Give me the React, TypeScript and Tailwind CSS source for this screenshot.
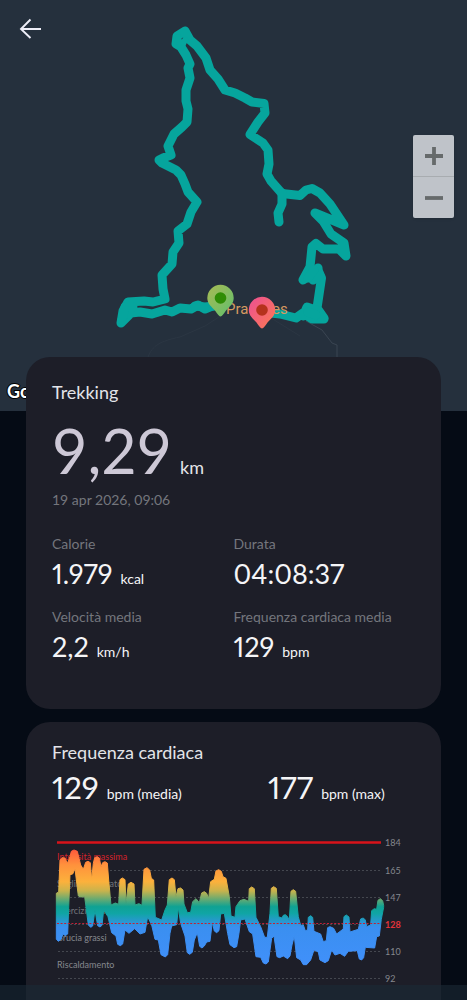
import React from "react";

type Point = [number, number];

// Heart-rate band outline, in thirds of a chart unit.
const upperEdge: Point[] = [
  [49, 190], [56, 186], [60, 90], [66, 83], [75, 84], [82, 100], [90, 80], [94, 64], [102, 60], [112, 64], [122, 105], [130, 118], [137, 97], [144, 94], [151, 98], [155, 150],
  [160, 100], [164, 83], [171, 80], [178, 84], [183, 110], [188, 98], [195, 95], [202, 99], [206, 150], [213, 225], [226, 219], [236, 223], [240, 149], [247, 144], [255, 149],
  [258, 222], [265, 162], [273, 157], [282, 162], [285, 225], [297, 221], [306, 226], [312, 118], [321, 113], [329, 120], [334, 145], [341, 150], [346, 262], [365, 270],
  [375, 240], [382, 225], [388, 149], [396, 144], [403, 149], [408, 200], [414, 176], [422, 174], [429, 180], [432, 222], [442, 248], [452, 247], [458, 215], [468, 206], [478, 218], [485, 189],
  [493, 185], [500, 190], [506, 205], [512, 155], [523, 148], [528, 123], [536, 119], [544, 124], [549, 140], [558, 145], [568, 200], [573, 258], [585, 262], [588, 230],
  [600, 212], [612, 208], [626, 214], [628, 176], [635, 171], [643, 176], [648, 262], [662, 290], [674, 322], [682, 322], [690, 250], [694, 175], [701, 170], [709, 175],
  [715, 260], [726, 264], [730, 256], [736, 254], [743, 260], [748, 272], [753, 184], [760, 179], [767, 184], [775, 260], [782, 286], [790, 285], [796, 302], [803, 300], [805, 262], [812, 257],
  [818, 262], [822, 304], [842, 312], [850, 335], [859, 332], [863, 293], [870, 290], [881, 295], [890, 312], [910, 297], [912, 260], [919, 255], [927, 261], [930, 306], [955, 298],
  [962, 267], [970, 264], [976, 270], [980, 290], [992, 285], [995, 242], [1003, 236], [1010, 238], [1014, 211], [1021, 206], [1028, 212], [1031, 226],
];

const lowerEdge: Point[] = [
  [49, 328], [55, 334], [63, 328], [69, 312], [76, 317], [83, 312], [90, 134], [98, 132], [105, 116], [115, 198], [122, 201], [134, 200], [145, 285], [152, 292], [158, 288],
  [165, 240], [173, 287], [180, 291], [186, 286], [191, 240], [204, 260], [215, 308], [228, 318], [233, 343], [241, 347], [248, 342], [255, 300], [267, 310], [284, 296], [300, 312],
  [315, 307], [323, 260], [335, 285], [345, 328], [355, 330], [363, 374], [376, 381], [383, 374], [390, 310], [395, 288], [410, 284], [415, 232], [422, 280], [435, 318], [442, 368],
  [449, 373], [457, 367], [463, 330], [472, 308], [479, 349], [486, 354], [493, 348], [500, 336], [510, 334], [517, 276], [523, 303], [530, 308], [537, 302], [542, 252], [553, 250],
  [563, 310], [570, 344], [582, 353], [590, 350], [597, 310], [602, 270], [615, 267], [628, 305], [638, 312], [648, 380], [662, 382], [670, 399], [678, 402], [685, 396], [695, 325],
  [702, 318], [711, 380], [719, 383], [730, 378], [743, 386], [750, 378], [756, 345], [763, 318], [770, 383], [782, 390], [790, 404], [800, 404], [812, 390], [822, 360], [835, 366],
  [840, 390], [855, 398], [865, 392], [875, 360], [885, 375], [900, 370], [914, 379], [925, 364], [952, 362], [958, 387], [965, 390], [971, 383], [976, 352], [1004, 354],
  [1010, 320], [1018, 318], [1024, 268], [1031, 232],
];

const bandPoints = [...upperEdge, ...[...lowerEdge].reverse()].map((p) => p.join(",")).join(" ");

const gridLines = [
  { y: 40, value: "165" },
  { y: 67, value: "147" },
  { y: 94, value: "128" },
  { y: 121, value: "110" },
  { y: 148, value: "92" },
];

const zones = [
  { label: "Intensità massima", y: 27, tone: "fill-[#d3222b]" },
  { label: "Soglia del lattato", y: 54, tone: "fill-[#72757c]" },
  { label: "Esercizio aerobico", y: 81, tone: "fill-[#72757c]" },
  { label: "Brucia grassi", y: 108, tone: "fill-[#85888e]" },
  { label: "Riscaldamento", y: 135, tone: "fill-[#85888e]" },
];

function HeartRateChart() {
  return (
    <svg viewBox="51 830 365 155" className="block w-full" role="img" aria-label="Frequenza cardiaca">
      <defs>
        <linearGradient id="zones" gradientUnits="userSpaceOnUse" x1="0" y1="60" x2="0" y2="400">
          <stop offset="0" stopColor="#ff5a3c" />
          <stop offset="0.13" stopColor="#ff913c" />
          <stop offset="0.28" stopColor="#fcb13c" />
          <stop offset="0.36" stopColor="#c9b34c" />
          <stop offset="0.5" stopColor="#0fa293" />
          <stop offset="0.56" stopColor="#10a5a5" />
          <stop offset="0.68" stopColor="#3a8ff0" />
          <stop offset="1" stopColor="#4090fa" />
        </linearGradient>
      </defs>
      <g transform="translate(0 830)" className="font-['Lato',sans-serif] text-[9px]">
        {zones.map((zone) => (
          <text key={zone.label} x="57" y={zone.y + 3} className={zone.tone}>
            {zone.label}
          </text>
        ))}
        {gridLines.map((line) => (
          <line key={line.value} x1="58" x2="380" y1={line.y + 0.5} y2={line.y + 0.5} stroke="#44474f" strokeDasharray="2 2" />
        ))}
        <g transform="translate(40 0) scale(0.3333)">
          <polygon points={bandPoints} fill="url(#zones)" stroke="url(#zones)" strokeWidth="3" strokeLinejoin="round" />
        </g>
        <line x1="57" x2="381" y1="12.5" y2="12.5" stroke="#d8131a" strokeWidth="2.4" />
        <line x1="57" x2="381" y1="93.5" y2="93.5" stroke="#c41f36" strokeDasharray="2 1.6" />
        <text x="385" y="16" className="fill-[#85888e]">184</text>
        {gridLines.map((line) => (
          <text key={line.value} x="385" y={line.y + 4} className={line.value === "128" ? "fill-[#e0333a] font-bold" : "fill-[#85888e]"}>
            {line.value}
          </text>
        ))}
      </g>
    </svg>
  );
}

function Pin({ x, y, from, to, dot }: { x: number; y: number; from: string; to: string; dot: string }) {
  const id = `pin-${x}`;
  return (
    <g transform={`translate(${x} ${y})`}>
      <defs>
        <linearGradient id={id} x1="0" y1="0" x2="1" y2="1">
          <stop offset="0.2" stopColor={from} />
          <stop offset="0.9" stopColor={to} />
        </linearGradient>
      </defs>
      <path d="M0 18.5C-1.5 18.5 -3 16 -5.500 12.500C-8.500 9 -13.200 6 -13.200 0A13.200 13.200 0 0 1 13.200 0C13.200 6 8.500 9 5.500 12.500C3 16 1.500 18.500 0 18.500Z" fill={`url(#${id})`} />
      <circle r="5.8" fill={dot} />
    </g>
  );
}

function RouteMap() {
  return (
    <svg viewBox="0 0 467 411" preserveAspectRatio="xMidYMid slice" className="block h-full w-full" role="img" aria-label="Percorso">
      <path d="M148 357C152 346 160 341 180 337L205 326L222 315M263 313L300 336" fill="none" stroke="#2b3643" />
      <path d="M306 321L322 330L332 343L337 345V357" fill="none" stroke="#3a4552" />
      <g fill="none" stroke="#06a59d" strokeWidth="9" strokeLinejoin="round" strokeLinecap="round">
        <path d="M218 305L212 306L205 309L198 305L191 309L180 308L172 312L165 310L152 314L140 312L131 313L121 323L123 311L128 302L144 301L153 302L165 299L163 289L162 275L172 264L173 252L179 243L178 231L187 224L191 212L197 202L188 192L185 184L181 175L176 170L162 163L159 160L163 158L171 155L168 146L174 134L182 127L187 122L188 109L186 101L186 90L190 78L188 68L190 64L186 55L181 47L176 44L177 36L185 31L190 40L197 46L206 58L210 70L218 79L225 90L235 93L245 98L252 102L264 103.500L265 113L258 122L250 134.500L263 143L268 150L269 164L267 174L271 181L282 193.500L300 195.500L306 190L312 188.500L320 193L330 204L344 225L332 220L315 213L323 221L331 234L344 243L346 256L339 249L323 249L316 243.500L312 247L310 267L303 280L318 270L321.500 278L317 308L324 318" />
        <path d="M282 193L282 204L278 213L279 222M318 268L313 280L320 276M262 312L280 314L288 316L296 318L303 313L312 319L324 319L316 310L307 307L303 316" />
        <path d="M122 320L125 307L133 307M195 306L205 307L214 306M314 270L308 278M308 312L316 315" />
        <path d="M178 37L181 48L185 40" strokeWidth="6" />
      </g>
      <text x="226" y="314" className="fill-[#d69a61] font-['Roboto',sans-serif] text-[15px]">Pradelles</text>
      <Pin x={220.5} y={298} from="#9abb59" to="#67bf6b" dot="#2f8d05" />
      <Pin x={262} y={310} from="#ef5787" to="#fb7658" dot="#b5321c" />
      <text x="7" y="398" className="fill-white stroke-black font-['Lato',sans-serif] text-[18px] font-bold" strokeWidth="2" paintOrder="stroke">
        Go
      </text>
    </svg>
  );
}

function Stat({ label, value, unit }: { label: string; value: string; unit?: string }) {
  return (
    <div>
      <dt className="text-sm leading-5 text-[#74767d]">{label}</dt>
      <dd className="mt-0.5 flex items-baseline gap-2 text-[27px] leading-9 text-[#f5f5f7] proportional-nums">
        {value}
        {unit && <span className="text-sm">{unit}</span>}
      </dd>
    </div>
  );
}

export default function App() {
  return (
    <div className="flex min-h-screen flex-col bg-[#050b15] font-['Lato',sans-serif] text-[#e3e4e8]">
      <header className="relative h-[411px] bg-[#25303d]">
        <RouteMap />
        <button type="button" aria-label="Indietro" className="absolute top-3 left-3.5 p-1">
          <svg viewBox="0 0 24 24" className="size-6" fill="none" stroke="#eeeef8" strokeWidth="1.900">
            <path d="M23 13H3M12.500 3.500L3 13L12.500 22" />
          </svg>
        </button>
        <div className="absolute top-[135px] right-[13px] flex w-[41px] flex-col divide-y divide-[#a8acb0] rounded-xs bg-[#bfc3c9] shadow-sm">
          <button type="button" aria-label="Ingrandisci" className="flex h-[42px] items-center justify-center">
            <svg viewBox="0 0 18 18" className="size-[18px]" stroke="#666a6b" strokeWidth="3.800">
              <path d="M0 9H18M9 0V18" />
            </svg>
          </button>
          <button type="button" aria-label="Riduci" className="flex h-[41px] items-center justify-center">
            <svg viewBox="0 0 18 18" className="size-[18px]" stroke="#666a6b" strokeWidth="3.800">
              <path d="M0 9H18" />
            </svg>
          </button>
        </div>
      </header>

      <main className="relative -mt-[54px] flex grow flex-col gap-[13px] px-[26px]">
        <section className="rounded-3xl bg-[#1d1e28] px-[26px] pt-[23px] pb-11">
          <h1 className="text-lg leading-6">Trekking</h1>
          <p className="mt-3 flex items-baseline gap-2 text-[61px] leading-[70px] text-[#cdc8d6]">
            9,29 <span className="text-lg text-[#e3e4e8]">km</span>
          </p>
          <p className="mt-1 text-sm leading-5 text-[#74767d]">19 apr 2026, 09:06</p>
          <dl className="mt-6 grid grid-cols-2 gap-y-[15px]">
            <Stat label="Calorie" value="1.979" unit="kcal" />
            <Stat label="Durata" value="04:08:37" />
            <Stat label="Velocità media" value="2,2" unit="km/h" />
            <Stat label="Frequenza cardiaca media" value="129" unit="bpm" />
          </dl>
        </section>

        <section className="grow rounded-t-3xl bg-[#1d1e28] pt-[18px]">
          <h2 className="px-[26px] text-lg leading-6">Frequenza cardiaca</h2>
          <div className="mt-0.5 flex px-[26px] text-[31px] leading-[42px] text-[#f5f5f7] proportional-nums">
            <p className="flex w-[216px] items-baseline gap-2">
              129 <span className="text-sm">bpm (media)</span>
            </p>
            <p className="flex items-baseline gap-2">
              177 <span className="text-sm">bpm (max)</span>
            </p>
          </div>
          <div className="mt-[22px] px-[25px]">
            <HeartRateChart />
          </div>
        </section>
      </main>
      <div className="fixed inset-x-0 bottom-0 h-[15px] bg-[#1a2a36]/60" />
    </div>
  );
}
